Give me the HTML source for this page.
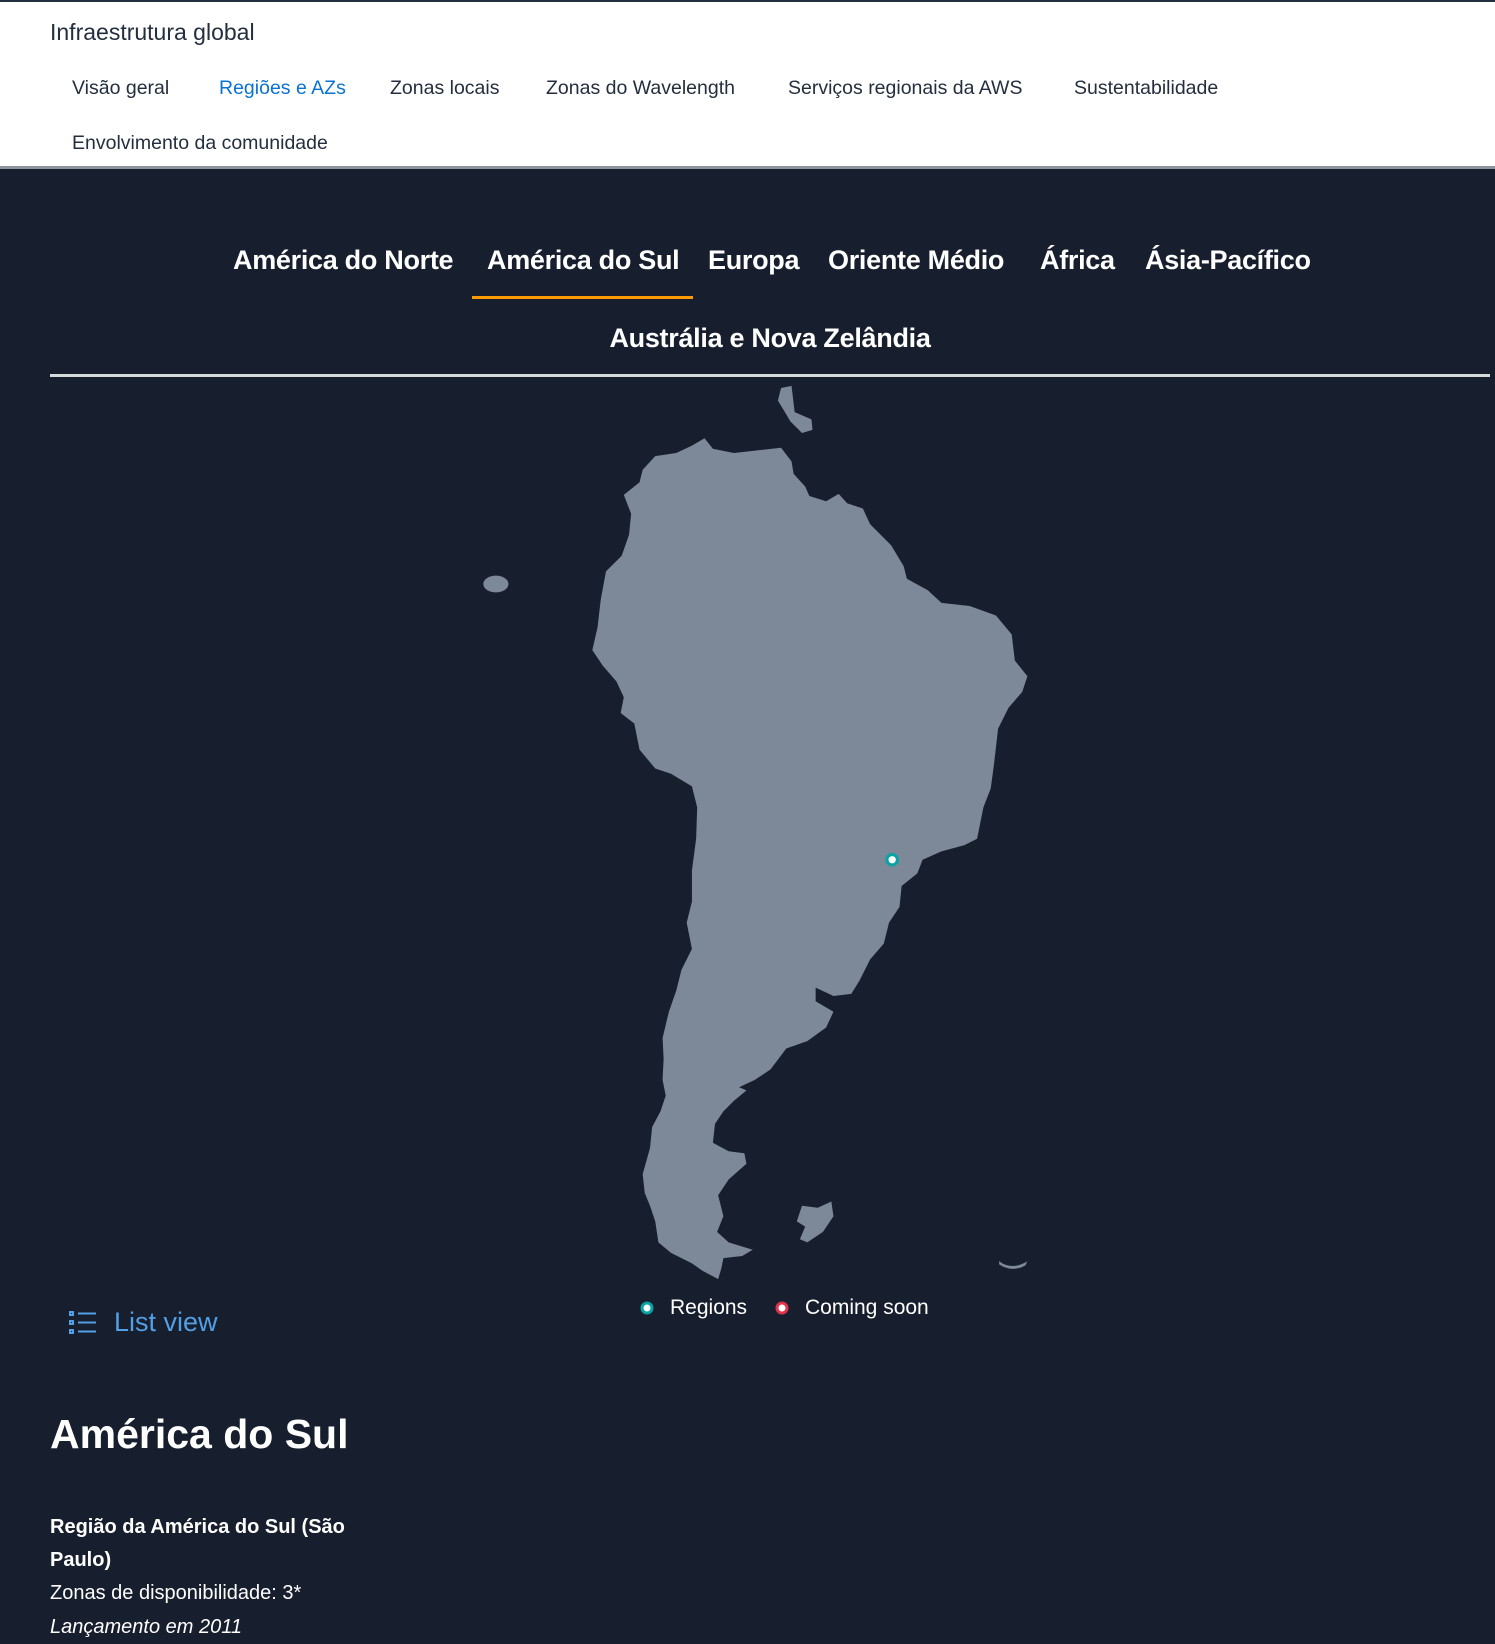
<!DOCTYPE html>
<html><head><meta charset="utf-8"><style>
*{margin:0;padding:0;box-sizing:border-box}
body{width:1495px;height:1644px;overflow:hidden;background:#171e2d;font-family:"Liberation Sans",sans-serif;position:relative}
.top{position:absolute;left:0;top:0;width:1495px;height:169px;background:#fff;border-top:2px solid #232f3e;border-bottom:3px solid #8d949c}
.a{position:absolute;white-space:nowrap}
.n{font-size:19.5px;color:#232f3e;top:75px}
.t{font-size:27px;font-weight:bold;color:#fff;top:245px;letter-spacing:-0.3px}
.w{color:#fff}
</style></head><body>
<div class="top">
<div class="a" style="left:50px;top:17px;font-size:23px;color:#232f3e">Infraestrutura global</div>
<div class="a n" style="left:72px">Visão geral</div>
<div class="a n" style="left:219px;color:#0972d3">Regiões e AZs</div>
<div class="a n" style="left:390px">Zonas locais</div>
<div class="a n" style="left:546px">Zonas do Wavelength</div>
<div class="a n" style="left:788px">Serviços regionais da AWS</div>
<div class="a n" style="left:1074px">Sustentabilidade</div>
<div class="a n" style="left:72px;top:130px">Envolvimento da comunidade</div>
</div>
<div class="a t" style="left:233px">América do Norte</div>
<div class="a t" style="left:487px">América do Sul</div>
<div class="a t" style="left:708px">Europa</div>
<div class="a t" style="left:828px">Oriente Médio</div>
<div class="a t" style="left:1040px">África</div>
<div class="a t" style="left:1145px">Ásia-Pacífico</div>
<div class="a" style="left:472px;top:296px;width:221px;height:3px;background:#ff9900"></div>
<div class="a t" style="left:0;width:1540px;text-align:center;top:323px">Austrália e Nova Zelândia</div>
<div class="a" style="left:50px;top:374px;width:1440px;height:3px;background:#d5dbdb"></div>
<svg class="a" style="left:0;top:0" width="1495" height="1644" viewBox="0 0 1426 1568">
<g fill="#7d8998">
<path d="M672,418 L680,428 L700,432 L745,427 L755,440 L757,452 L768,464 L772,473 L788,478 L800,471 L808,480 L823,485 L830,500 L850,520 L862,540 L865,552 L885,563 L898,575 L925,578 L950,587 L965,605 L968,630 L980,645 L975,660 L962,675 L952,695 L948,730 L945,752 L938,770 L932,800 L920,806 L898,812 L880,820 L875,833 L860,845 L858,865 L848,880 L843,900 L830,915 L820,935 L812,948 L795,950 L778,942 L778,955 L795,965 L788,980 L770,993 L750,1000 L735,1020 L720,1030 L705,1037 L712,1040 L700,1050 L690,1060 L682,1072 L680,1090 L695,1098 L710,1100 L712,1110 L695,1125 L685,1140 L690,1160 L684,1175 L695,1185 L718,1192 L708,1198 L690,1200 L688,1210 L685,1220 L670,1212 L660,1205 L640,1195 L628,1185 L625,1165 L620,1150 L615,1138 L613,1120 L620,1095 L622,1075 L630,1060 L635,1045 L632,1030 L633,1010 L632,990 L638,965 L645,945 L650,925 L660,905 L655,880 L660,860 L660,830 L664,800 L665,770 L660,750 L640,738 L625,733 L610,715 L605,690 L592,680 L595,665 L588,650 L575,635 L565,620 L570,598 L573,572 L578,545 L593,530 L600,510 L602,490 L595,472 L610,460 L613,448 L625,435 L645,432 L660,425 Z"/>
<ellipse cx="473" cy="557" rx="12" ry="8"/>
<path d="M745,370 L755,368 L758,393 L774,400 L775,410 L765,413 L754,402 L742,382 Z"/>
<path d="M765,1150 L780,1152 L793,1146 L795,1160 L785,1175 L770,1185 L763,1182 L768,1170 L760,1165 Z"/>
<path d="M953,1203 Q965,1212 980,1203 L978,1207 Q965,1214 953,1206 Z"/>
</g>
<circle cx="851" cy="820" r="5" fill="#fff" stroke="#0aa3a3" stroke-width="3"/>
</svg>
<svg class="a" style="left:640px;top:1301px" width="14" height="14"><circle cx="7" cy="7" r="5" fill="#fff" stroke="#0aa3a3" stroke-width="3"/></svg>
<div class="a w" style="left:670px;top:1296px;font-size:21px">Regions</div>
<svg class="a" style="left:775px;top:1301px" width="14" height="14"><circle cx="7" cy="7" r="5" fill="#fff" stroke="#e0344a" stroke-width="3"/></svg>
<div class="a w" style="left:805px;top:1296px;font-size:21px">Coming soon</div>
<svg class="a" style="left:69px;top:1310px" width="28" height="26" fill="none" stroke="#539fe5" stroke-width="2">
<rect x="1" y="2" width="3" height="3"/><rect x="1" y="11" width="3" height="3"/><rect x="1" y="20" width="3" height="3"/>
<path d="M9 3.5H27M9 12.5H27M9 21.5H27"/></svg>
<div class="a" style="left:114px;top:1307px;font-size:27px;color:#539fe5">List view</div>
<div class="a w" style="left:50px;top:1411px;font-size:41px;font-weight:bold">América do Sul</div>
<div class="a w" style="left:50px;top:1511px;font-size:20px;font-weight:bold;line-height:33px">Região da América do Sul (São<br>Paulo)</div>
<div class="a w" style="left:50px;top:1582px;font-size:20px">Zonas de disponibilidade: 3*</div>
<div class="a w" style="left:50px;top:1616px;font-size:20px;font-style:italic">Lançamento em 2011</div>
</body></html>
